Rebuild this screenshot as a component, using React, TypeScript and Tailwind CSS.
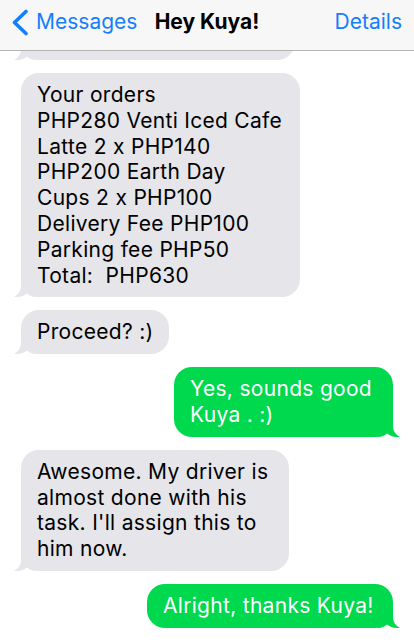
import type React from "react"

const GRAY = "#e5e5ea"
const GREEN = "#00d84e"

function Tail({ side, color }: { side: "left" | "right"; color: string }) {
  // little curled tail at the bottom corner of a bubble
  return (
    <svg
      width="22"
      height="22"
      viewBox="0 0 22 22"
      className={
        side === "left"
          ? "absolute bottom-0 left-[-7px]"
          : "absolute bottom-0 right-[-7px] scale-x-[-1]"
      }
    >
      <path d="M7 0 L7 11 C7 16 4.5 19.5 0 22 C6 22.3 10 21 13 18.5 C15.5 20.8 18.5 22 22 22 L22 0 Z" fill={color} />
    </svg>
  )
}

function Bubble({
  side,
  width,
  children,
}: {
  side: "left" | "right"
  width: string
  children: React.ReactNode
}) {
  const mine = side === "right"
  return (
    <div className={`flex ${mine ? "justify-end" : "justify-start"}`}>
      <div
        className={`relative rounded-[18px] pl-4 pr-3 py-[9px] text-[21px] leading-[25.8px] tracking-[0.3px] whitespace-nowrap ${width} ${
          mine ? "bg-[#00d84e] text-white" : "bg-[#e5e5ea] text-black"
        }`}
      >
        <Tail side={side} color={mine ? GREEN : GRAY} />
        <div className="relative">{children}</div>
      </div>
    </div>
  )
}

export default function App() {
  return (
    <div className="w-[414px] h-[640px] overflow-hidden bg-white font-['Inter','Liberation_Sans',sans-serif] flex flex-col">
      {/* Nav bar */}
      <div className="relative h-[51px] shrink-0 bg-[#f7f7f7] border-b border-[#b4b4b4] flex items-center pb-[6px] px-[11px]">
        <div className="flex items-center text-[#157efb]">
          <svg width="18" height="27" viewBox="0 0 18 27" className="mr-[7px]">
            <polyline points="15,2.5 3.5,13.5 15,24.5" fill="none" stroke="#157efb" strokeWidth="3.6" strokeLinecap="round" strokeLinejoin="round" />
          </svg>
          <span className="text-[21px]">Messages</span>
        </div>
        <div className="absolute left-0 right-0 top-0 bottom-[6px] flex items-center justify-center pointer-events-none">
          <span className="text-[21px] font-bold text-black">Hey Kuya!</span>
        </div>
        <span className="ml-auto mr-[1px] text-[21px] text-[#157efb]">Details</span>
      </div>

      {/* Conversation */}
      <div className="flex-1 overflow-hidden flex flex-col gap-[13px] px-[21px]">
        <div className="-mt-[31px]">
          <div className="relative h-[40px] w-[274px] rounded-[18px] bg-[#e5e5ea]">
            <Tail side="left" color={GRAY} />
          </div>
        </div>

        <Bubble side="left" width="w-[279px]">
          <div>Your orders</div>
          <div>PHP280 Venti Iced Cafe</div>
          <div>Latte 2 x PHP140</div>
          <div>PHP200 Earth Day</div>
          <div>Cups 2 x PHP100</div>
          <div>Delivery Fee PHP100</div>
          <div>Parking fee PHP50</div>
          <div>Total:&nbsp; PHP630</div>
        </Bubble>

        <Bubble side="left" width="w-[148px]">
          <div>Proceed? :)</div>
        </Bubble>

        <Bubble side="right" width="w-[219px]">
          <div>Yes, sounds good</div>
          <div>Kuya . :)</div>
        </Bubble>

        <Bubble side="left" width="w-[268px]">
          <div>Awesome. My driver is</div>
          <div>almost done with his</div>
          <div>task. I'll assign this to</div>
          <div>him now.</div>
        </Bubble>

        <Bubble side="right" width="w-[246px]">
          <div>Alright, thanks Kuya!</div>
        </Bubble>
      </div>
    </div>
  )
}
